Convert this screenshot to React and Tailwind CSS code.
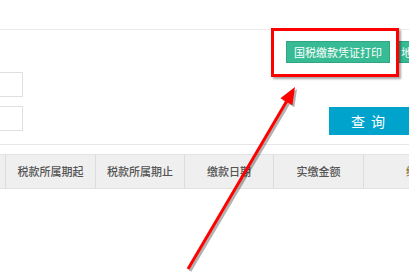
import React from "react";

export default function App() {
  const cols = [
    ["税款所属期起", "w-[90px]"],
    ["税款所属期止", "w-[89px]"],
    ["缴款日期", "w-[89px]"],
    ["实缴金额", "w-[90px]"],
  ];
  return (
    <div
      className="relative w-[409px] h-[275px] bg-white overflow-hidden"
      style={{ fontFamily: '"Noto Sans CJK SC", "Noto Sans", sans-serif' }}
    >
      <div className="h-[29px]" />
      <div className="h-px bg-[#ebebeb]" />
      <div className="flex justify-end pt-[11px] gap-[6px] -mr-[40px]">
        <div className="w-[104px] h-[22px] bg-[#37bb94] border border-[#2fa582] text-white text-[11px] leading-[20px] text-center">
          国税缴款凭证打印
        </div>
        <div className="w-[53px] h-[22px] bg-[#37bb94] border border-[#2fa582] text-white text-[11px] leading-[20px] pl-[4px] whitespace-nowrap overflow-hidden">
          地税缴
        </div>
      </div>
      <div className="flex justify-between items-start mt-[9px]">
        <div className="flex flex-col gap-[9px]">
          <div className="w-[23px] h-[25px] border border-l-0 border-[#e0e0e0]" />
          <div className="w-[23px] h-[25px] border border-l-0 border-[#e0e0e0]" />
        </div>
        <div className="mt-[35px] w-[80px] h-[28px] bg-[#00a3cc] text-white text-[14px] leading-[28px] text-center tracking-[6px] pl-[4px]">
          查询
        </div>
      </div>
      <div className="h-px bg-[#e6e6e6] mt-[9px]" />
      <div className="mt-[9px] h-[35px] flex bg-[#efefef] border-y border-[#e2e2e2] text-[11px] text-[#555] font-medium">
        <div className="w-[6px] shrink-0 border-r border-[#dcdcdc]" />
        {cols.map(([c, w]) => (
          <div
            key={c}
            className={`${w} shrink-0 border-r border-[#dcdcdc] flex items-center justify-center`}
          >
            {c}
          </div>
        ))}
        <div className="flex-1 flex items-center justify-end whitespace-nowrap overflow-hidden">
          <span className="-mr-[8px] text-[#8a6d3b]">缴</span>
        </div>
      </div>

      <div className="absolute left-[271px] top-[28px] w-[128px] h-[49px] border-[3px] border-[#ff0000] shadow-[2px_2px_2px_rgba(0,0,0,0.35)]" />

      <svg className="absolute left-0 top-0" width="409" height="275" viewBox="0 0 409 275">
        <g transform="translate(2,2)" opacity="0.3">
          <line x1="188" y1="269" x2="288" y2="99" stroke="#000" strokeWidth="3" />
          <polygon points="295,87 292.4,105.2 280.4,98.2" fill="#000" />
        </g>
        <line x1="188" y1="269" x2="288" y2="99" stroke="#ff0000" strokeWidth="3" />
        <polygon points="295,87 292.4,105.2 280.4,98.2" fill="#ff0000" />
      </svg>
    </div>
  );
}
